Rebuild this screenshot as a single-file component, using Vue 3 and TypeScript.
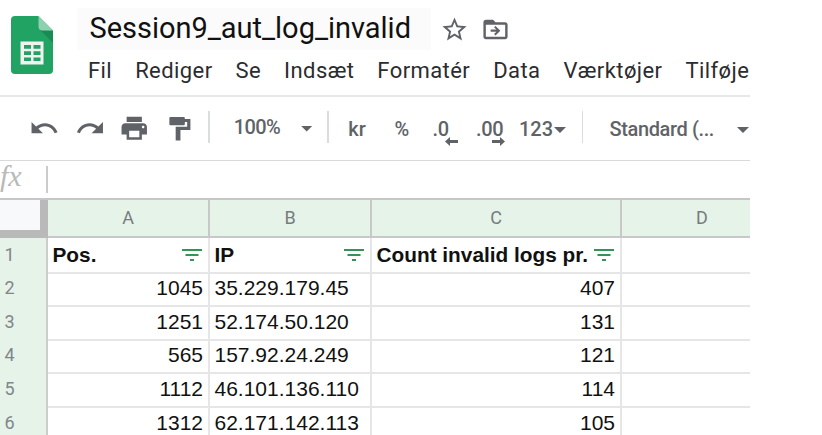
<script setup lang="ts">
interface Row {
  n: number
  pos: string
  ip: string
  count: string
}

const menus: string[] = ['Fil', 'Rediger', 'Se', 'Indsæt', 'Formatér', 'Data', 'Værktøjer', 'Tilføje']
const columns: string[] = ['A', 'B', 'C', 'D']
const titles: string[] = ['Pos.', 'IP', 'Count invalid logs pr.']
const rows: Row[] = [
  { n: 2, pos: '1045', ip: '35.229.179.45', count: '407' },
  { n: 3, pos: '1251', ip: '52.174.50.120', count: '131' },
  { n: 4, pos: '565', ip: '157.92.24.249', count: '121' },
  { n: 5, pos: '1112', ip: '46.101.136.110', count: '114' },
  { n: 6, pos: '1312', ip: '62.171.142.113', count: '105' },
]
</script>

<template>
  <main class="app">
    <header class="top">
      <svg class="logo" viewBox="0 0 42 58">
        <path d="M4 0H27.500L42 14.500V54a4 4 0 0 1-4 4H4a4 4 0 0 1-4-4V4a4 4 0 0 1 4-4z" fill="#21a363" />
        <path d="M29 14L42 27V14.500z" fill="#178c55" />
        <path d="M27.500 0L42 14.500H31.500a4 4 0 0 1-4-4z" fill="#8ed1b1" />
        <path d="M9.500 25.500h23v23h-23z" fill="#f1f1f1" />
        <path d="M13 29h7v3.700h-7zM22.500 29h7v3.700h-7zM13 35.200h7v3.700h-7zM22.500 35.200h7v3.700h-7zM13 41.400h7v3.700h-7zM22.500 41.400h7v3.700h-7z" fill="#21a363" />
      </svg>
      <div class="heading">
        <div class="title-row">
          <h1 class="title">Session9_aut_log_invalid</h1>
          <svg class="star" viewBox="0 0 24 24"><path d="M22 9.240l-7.190-.620L12 2 9.190 8.630 2 9.240l5.460 4.730L5.820 21 12 17.270 18.180 21l-1.630-7.030L22 9.240zM12 15.400l-3.760 2.270 1-4.280-3.320-2.880 4.380-.380L12 6.100l1.710 4.040 4.380.380-3.320 2.880 1 4.280L12 15.400z" /></svg>
          <svg class="folder" viewBox="0 0 24 24"><path d="M20 6h-8l-2-2H4c-1.100 0-2 .9-2 2v12c0 1.100.9 2 2 2h16c1.100 0 2-.9 2-2V8c0-1.100-.9-2-2-2zm0 12H4V8h16v10z" /><path d="M12 9l4 4-4 4-1.200-1.200 1.900-1.900H8v-1.800h4.700l-1.900-1.900z" /></svg>
        </div>
        <nav class="menu"><span v-for="m in menus" :key="m">{{ m }}</span></nav>
      </div>
    </header>

    <section class="toolbar">
      <svg class="ic" viewBox="0 0 24 24"><path d="M12.500 8c-2.650 0-5.050.99-6.900 2.600L2 7v9h9l-3.620-3.620c1.390-1.160 3.160-1.880 5.120-1.880 3.540 0 6.550 2.310 7.600 5.500l2.370-.780C21.080 11.030 17.150 8 12.500 8z" /></svg>
      <svg class="ic" viewBox="0 0 24 24"><path d="M18.400 10.600C16.550 8.990 14.150 8 11.500 8c-4.650 0-8.580 3.030-9.960 7.220L3.900 16c1.050-3.190 4.050-5.500 7.600-5.500 1.950 0 3.730.720 5.120 1.880L13 16h9V7l-3.600 3.600z" /></svg>
      <svg class="ic" viewBox="0 0 24 24"><path d="M19 8H5c-1.660 0-3 1.340-3 3v6h4v4h12v-4h4v-6c0-1.660-1.340-3-3-3zm-3 11H8v-5h8v5zm3-7c-.550 0-1-.450-1-1s.450-1 1-1 1 .450 1 1-.450 1-1 1zm-1-9H6v4h12V3z" /></svg>
      <svg class="ic" viewBox="0 0 30 30"><path d="M5.300 4h13.200a1 1 0 0 1 1 1v.8H25v11H15.200V27h-4.700V13.500h11.300V8.800h-2.300V11a1 1 0 0 1-1 1H5.300a1 1 0 0 1-1-1V5a1 1 0 0 1 1-1z" /></svg>
      <i class="sep"></i>
      <span class="zoom">100%</span>
      <i class="caret"></i>
      <i class="sep"></i>
      <span class="kr">kr</span>
      <span class="pct">%</span>
      <span class="dec">.0<svg class="arrow left" viewBox="0 0 13 9"><path d="M0 4.500L5 0v3h8v3H5v3z" /></svg></span>
      <span class="dec">.00<svg class="arrow right" viewBox="0 0 13 9"><path d="M13 4.500L8 0v3H0v3h8v3z" /></svg></span>
      <span class="num">123</span>
      <i class="caret low"></i>
      <i class="sep"></i>
      <span class="font">Standard (...</span>
      <i class="caret low"></i>
    </section>

    <section class="formula"><span class="fx">fx</span><i></i></section>

    <section class="sheet">
      <div class="line cols">
        <div class="corner"></div>
        <div v-for="c in columns" :key="c" class="col">{{ c }}</div>
      </div>
      <div class="line first">
        <div class="idx">1</div>
        <div v-for="t in titles" :key="t" class="cell head">
          <span>{{ t }}</span>
          <svg class="filter" viewBox="0 0 20 12"><path d="M0 0h20v2H0zM3.500 5h13v2h-13zM8 10h4v2H8z" /></svg>
        </div>
        <div class="cell"></div>
      </div>
      <div v-for="r in rows" :key="r.n" class="line">
        <div class="idx">{{ r.n }}</div>
        <div class="cell end">{{ r.pos }}</div>
        <div class="cell">{{ r.ip }}</div>
        <div class="cell end">{{ r.count }}</div>
        <div class="cell"></div>
      </div>
    </section>
  </main>
</template>

<style>
body {
  background: #fff;
  overflow: hidden;
}
</style>

<style scoped>
* {
  box-sizing: border-box;
}
.app {
  width: 750px;
  height: 435px;
  overflow: hidden;
  background: #fff;
  font-family: Roboto, "Liberation Sans", sans-serif;
}
.top {
  display: flex;
  height: 97px;
  padding: 8px 0 0 10.5px;
  border-bottom: 2px solid #e6e7eb;
}
.logo {
  flex: none;
  width: 42px;
  height: 58px;
  margin-top: 8px;
}
.heading {
  flex: none;
  margin-left: 24.5px;
}
.title-row {
  display: flex;
  height: 42px;
}
.title {
  width: 354px;
  height: 42px;
  margin: 0;
  padding-left: 12.5px;
  background: #fbfbfb;
  color: #111;
  font-size: 29px;
  font-weight: 400;
  line-height: 41px;
  letter-spacing: -0.02px;
  white-space: nowrap;
}
.star,
.folder {
  width: 29px;
  height: 29px;
  fill: #5f6368;
}
.star {
  margin: 7px 0 0 9.3px;
}
.folder {
  margin: 6.5px 0 0 12px;
}
.menu {
  display: flex;
  gap: 23px;
  padding-left: 11px;
  color: #2b2c2f;
  font-size: 22px;
  line-height: 41px;
  letter-spacing: 0.42px;
  white-space: nowrap;
}
.toolbar {
  display: grid;
  grid-template-columns: 46.2px 44px 46px 43.500px 25.500px 67px 26.800px 20.800px 46.200px 38px 43.500px 43px 35px 28px 27.500px 127.500px 13px;
  height: 63px;
  padding: 0 0 0 28.500px;
  align-items: center;
  color: #5f6368;
  font-size: 20px;
  font-weight: 500;
  white-space: nowrap;
}
.ic {
  width: 30.500px;
  height: 30.500px;
  fill: #5f6368;
}
.sep {
  width: 1.500px;
  height: 32px;
  margin-top: -3px;
  background: #dadce0;
}
.caret {
  width: 12px;
  height: 6px;
  background: #5f6368;
  clip-path: polygon(0 0, 100% 0, 50% 100%);
}
.low {
  margin-top: 3px;
}
.zoom {
  margin-top: -3px;
  letter-spacing: -0.6px;
}
.font {
  letter-spacing: -0.38px;
}
.dec {
  position: relative;
  letter-spacing: -0.3px;
}
.arrow {
  position: absolute;
  top: 20px;
  width: 13px;
  height: 9px;
  fill: #5f6368;
}
.left {
  left: 13px;
}
.right {
  left: 16px;
}
.formula {
  display: flex;
  height: 38px;
  border-top: 1px solid #d9d9d9;
}
.fx {
  width: 46px;
  color: #b9b9b9;
  font: italic 30px/30px "Liberation Serif", serif;
}
.formula i {
  width: 1.500px;
  height: 27px;
  margin-top: 5px;
  background: #ccc;
}
.sheet {
  border-top: 2px solid #c6c6c6;
}
.line {
  display: grid;
  grid-template-columns: 48px 162px 162px 250px 162px;
  height: 33.600px;
}
.line.cols {
  height: 38px;
}
.line.first {
  height: 33.200px;
}
.corner {
  background: #f8f9fa;
  border: solid #b9b9b9;
  border-width: 0 8px 8px 0;
}
.col {
  background: #e6f3e8;
  border: solid #c8c8c8;
  border-width: 0 2px 2px 0;
  color: #777c80;
  font-size: 18px;
  line-height: 36px;
  text-align: center;
}
.idx {
  background: #e6f3e8;
  border: solid #cbcdcb;
  border-width: 0 2px 2px 0;
  padding-left: 4.500px;
  color: #80868b;
  font-size: 18px;
  line-height: 34px;
}
.cell {
  border: solid #e6e6e6;
  border-width: 0 2px 2px 0;
  padding: 0 5px 0 4.500px;
  color: #111;
  font-family: "Liberation Sans", Arial, sans-serif;
  font-size: 21px;
  line-height: 33.600px;
  white-space: nowrap;
}
.end {
  text-align: right;
}
.head {
  display: flex;
  justify-content: space-between;
  padding-right: 6px;
  font-size: 20.800px;
  font-weight: 700;
}
.filter {
  flex: none;
  width: 20px;
  height: 12px;
  margin-top: 11px;
  fill: #35935a;
}
</style>
